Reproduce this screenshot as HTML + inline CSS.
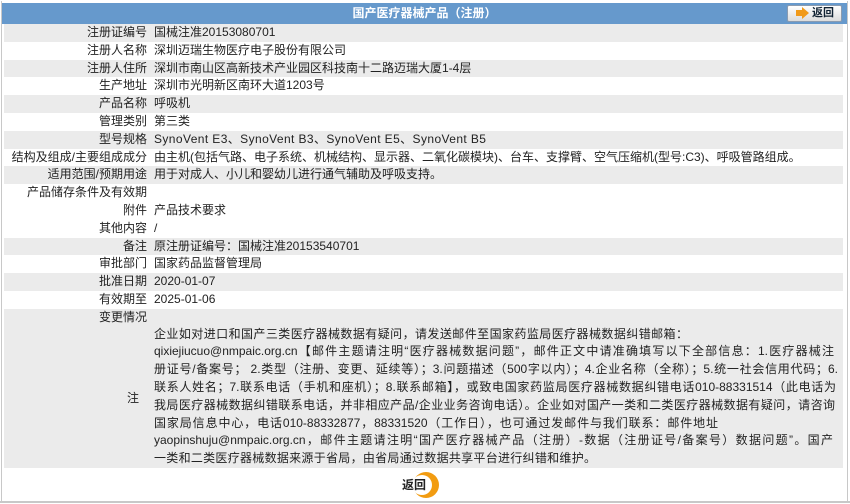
<!DOCTYPE html>
<html><head><meta charset="utf-8"><style>
*{margin:0;padding:0;box-sizing:border-box}
body{width:850px;height:504px;background:#fff;font-family:"Liberation Sans","Noto Sans CJK SC",sans-serif;font-size:12px;color:#222;position:relative;overflow:hidden}
.frame{position:absolute;left:1px;top:1px;width:847px;height:502px;border:1px solid #c8c8c8;border-top:none}
.hdr{position:absolute;left:2px;top:3px;width:845px;height:21px;background:#6699cc;color:#fff;font-weight:bold;text-align:center;line-height:21px;font-size:12px}
.btn{position:absolute;left:787px;top:5px;width:55px;height:17px;background:linear-gradient(#fff,#dcdcdc);border:1px solid #8a9bb0;border-radius:2px;color:#123;font-weight:bold;font-size:11px;line-height:15px;padding-left:24px}
.btn:before{content:"";position:absolute;left:8px;top:4px;width:6px;height:6px;background:#f19a1a}
.btn:after{content:"";position:absolute;left:14px;top:1px;border-left:7px solid #f19a1a;border-top:6px solid transparent;border-bottom:6px solid transparent}
.r{position:absolute;left:4px;width:839px;height:17.8px;line-height:17.8px;white-space:nowrap}
.g{background:#ebebeb}
.l{position:absolute;right:696px;top:0}
.v{position:absolute;left:150px;top:0}
.note{position:absolute;left:4px;top:326.6px;width:839px;height:141px;background:#ebebeb}
.note .t{position:absolute;left:150px;top:-1px;line-height:17.8px;white-space:nowrap}
.note .t span{display:block;text-align:justify;text-align-last:justify;height:17.8px}
.note .z{position:absolute;right:704px;top:62px}
.back{position:absolute;left:402px;top:476px;font-weight:bold;font-size:12px}
.circ{position:absolute;left:413px;top:472px;width:26px;height:26px;border-radius:50%;background:#f29c11}
.circ2{position:absolute;left:412px;top:475px;width:20px;height:20px;border-radius:50%;background:#fff}
.bl{position:absolute;left:0;top:501px;width:850px;height:2px;background:#c8c8c8}
</style></head><body>
<div class="frame"></div>
<div class="hdr">国产医疗器械产品（注册）</div>
<div class="btn">返回</div>
<div class="r g" style="top:24px"><span class="l">注册证编号</span><span class="v">国械注准20153080701</span></div>
<div class="r" style="top:41.8px"><span class="l">注册人名称</span><span class="v">深圳迈瑞生物医疗电子股份有限公司</span></div>
<div class="r g" style="top:59.6px"><span class="l">注册人住所</span><span class="v">深圳市南山区高新技术产业园区科技南十二路迈瑞大厦1-4层</span></div>
<div class="r" style="top:77.4px"><span class="l">生产地址</span><span class="v">深圳市光明新区南环大道1203号</span></div>
<div class="r g" style="top:95.2px"><span class="l">产品名称</span><span class="v">呼吸机</span></div>
<div class="r" style="top:113px"><span class="l">管理类别</span><span class="v">第三类</span></div>
<div class="r g" style="top:130.8px"><span class="l">型号规格</span><span class="v" style="letter-spacing:0.4px">SynoVent E3、SynoVent B3、SynoVent E5、SynoVent B5</span></div>
<div class="r" style="top:148.6px"><span class="l">结构及组成/主要组成成分</span><span class="v">由主机(包括气路、电子系统、机械结构、显示器、二氧化碳模块)、台车、支撑臂、空气压缩机(型号:C3)、呼吸管路组成。</span></div>
<div class="r g" style="top:166.4px"><span class="l">适用范围/预期用途</span><span class="v">用于对成人、小儿和婴幼儿进行通气辅助及呼吸支持。</span></div>
<div class="r" style="top:184.2px"><span class="l">产品储存条件及有效期</span></div>
<div class="r" style="top:202px"><span class="l">附件</span><span class="v">产品技术要求</span></div>
<div class="r" style="top:219.8px"><span class="l">其他内容</span><span class="v">/</span></div>
<div class="r g" style="top:237.6px"><span class="l">备注</span><span class="v">原注册证编号：国械注准20153540701</span></div>
<div class="r" style="top:255.4px"><span class="l">审批部门</span><span class="v">国家药品监督管理局</span></div>
<div class="r g" style="top:273.2px"><span class="l">批准日期</span><span class="v">2020-01-07</span></div>
<div class="r" style="top:291px"><span class="l">有效期至</span><span class="v">2025-01-06</span></div>
<div class="r g" style="top:308.8px"><span class="l">变更情况</span></div>
<div class="note"><span class="z">注</span><div class="t">
<span style="width:534px">企业如对进口和国产三类医疗器械数据有疑问，请发送邮件至国家药监局医疗器械数据纠错邮箱：</span>
<span style="width:680px">qixiejiucuo@nmpaic.org.cn【邮件主题请注明“医疗器械数据问题”，邮件正文中请准确填写以下全部信息：1.医疗器械注</span>
<span style="width:684px">册证号/备案号； 2.类型（注册、变更、延续等）；3.问题描述（500字以内）；4.企业名称（全称）；5.统一社会信用代码；6.</span>
<span style="width:682px">联系人姓名；7.联系电话（手机和座机）；8.联系邮箱】，或致电国家药监局医疗器械数据纠错电话010-88331514（此电话为</span>
<span style="width:681px">我局医疗器械数据纠错联系电话，并非相应产品/企业业务咨询电话）。企业如对国产一类和二类医疗器械数据有疑问，请咨询</span>
<span style="width:564px">国家局信息中心，电话010-88332877，88331520（工作日），也可通过发邮件与我们联系：邮件地址</span>
<span style="width:679px">yaopinshuju@nmpaic.org.cn，邮件主题请注明“国产医疗器械产品（注册）-数据（注册证号/备案号）数据问题”。国产</span>
<span style="width:442px">一类和二类医疗器械数据来源于省局，由省局通过数据共享平台进行纠错和维护。</span>
</div></div>
<div class="circ"></div><div class="circ2"></div>
<div class="back">返回</div>
<div class="bl"></div>
</body></html>
